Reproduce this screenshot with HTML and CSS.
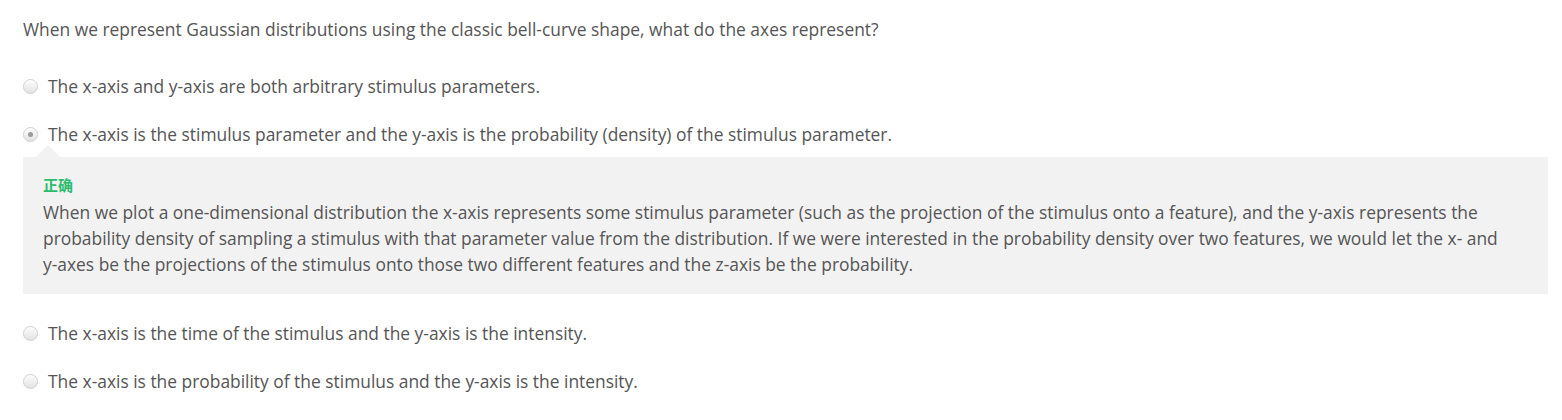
FILE: index.html
```html
<!DOCTYPE html>
<html>
<head>
<meta charset="utf-8">
<link rel="stylesheet" href="styles.css">
</head>
<body>
<div class="quiz">
  <div class="question">When we represent Gaussian distributions using the classic bell-curve shape, what do the axes represent?</div>
  <div class="options">
    <div class="option">
      <span class="radio"></span>
      <span class="label">The x-axis and y-axis are both arbitrary stimulus parameters.</span>
    </div>
    <div class="option selected">
      <span class="radio"></span>
      <span class="label">The x-axis is the stimulus parameter and the y-axis is the probability (density) of the stimulus parameter.</span>
    </div>
    <div class="feedback">
      <div class="feedback-title">正确</div>
      <div class="feedback-text">When we plot a one-dimensional distribution the x-axis represents some stimulus parameter (such as the projection of the stimulus onto a feature), and the y-axis represents the probability density of sampling a stimulus with that parameter value from the distribution. If we were interested in the probability density over two features, we would let the x- and <span class="nowrap">y-axes</span> be the projections of the stimulus onto those two different features and the z-axis be the probability.</div>
    </div>
    <div class="option after-feedback">
      <span class="radio"></span>
      <span class="label">The x-axis is the time of the stimulus and the y-axis is the intensity.</span>
    </div>
    <div class="option">
      <span class="radio"></span>
      <span class="label">The x-axis is the probability of the stimulus and the y-axis is the intensity.</span>
    </div>
  </div>
</div>
</body>
</html>
```
FILE: styles.css
```css
html, body {
  margin: 0;
  padding: 0;
  background: #ffffff;
}
body {
  font-family: "Open Sans", "Noto Sans", sans-serif;
  font-size: 17.4px;
  color: #555555;
}
.quiz {
  padding: 18px 14px 0 23px;
}
.question {
  line-height: 22px;
}
.options {
  display: flex;
  flex-direction: column;
  margin-top: 35px;
}
.option {
  display: flex;
  align-items: center;
  gap: 10px;
  line-height: 22px;
  margin-bottom: 26px;
}
.option.selected {
  margin-bottom: 0;
}
.radio {
  flex: none;
  width: 13px;
  height: 13px;
  border-radius: 50%;
  border: 1px solid #d0d0d0;
  background: linear-gradient(#fdfdfd, #e2e2e2);
  box-shadow: inset 0 1px 1px rgba(255,255,255,0.8);
  position: relative;
}
.selected .radio::after {
  content: "";
  position: absolute;
  left: 4px;
  top: 4px;
  width: 5px;
  height: 5px;
  border-radius: 50%;
  background: #9a9a9a;
}
.feedback {
  position: relative;
  margin-top: 12px;
  margin-bottom: 28px;
  background: #f2f2f2;
  padding: 18px 20px 17px 20px;
}
.feedback::before {
  content: "";
  position: absolute;
  left: 13px;
  top: -12px;
  border-left: 12px solid transparent;
  border-right: 12px solid transparent;
  border-bottom: 12px solid #f2f2f2;
}
.feedback-title {
  font-family: "Noto Sans CJK SC", "Noto Sans", sans-serif;
  font-weight: bold;
  font-size: 15px;
  line-height: 20px;
  color: #2bbd6e;
  margin-bottom: 4px;
}
.feedback-text {
  line-height: 26px;
}
.nowrap {
  white-space: nowrap;
}
```
